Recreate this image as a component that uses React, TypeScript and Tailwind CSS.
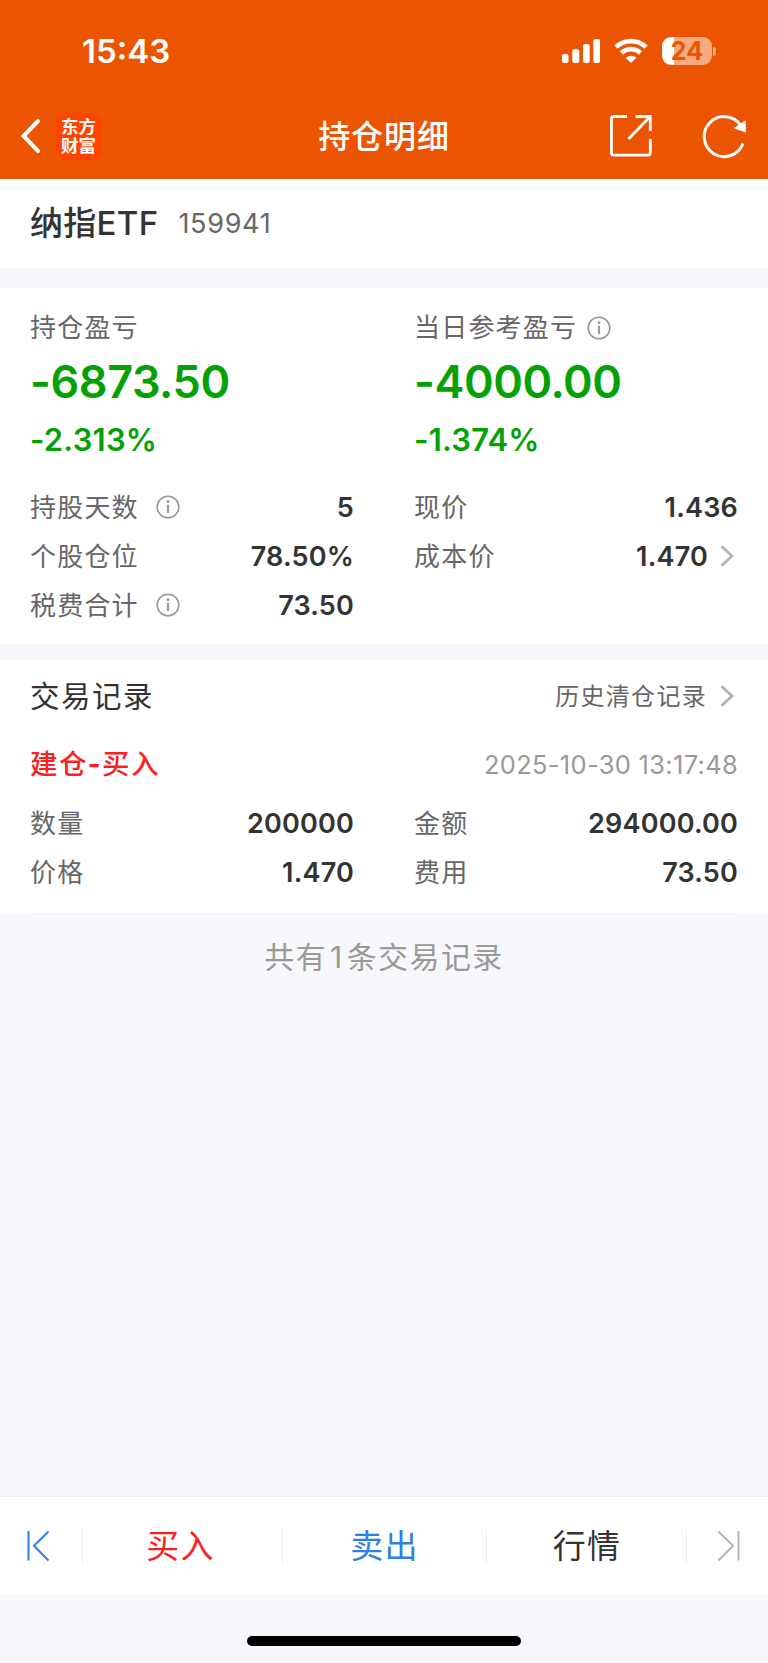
const positionRows = [
  { label: "持股天数", value: "5", info: true },
  { label: "现价", value: "1.436" },
  { label: "个股仓位", value: "78.50%" },
  { label: "成本价", value: "1.470", arrow: true },
  { label: "税费合计", value: "73.50", info: true },
];

const tradeRows = [
  { label: "数量", value: "200000" },
  { label: "金额", value: "294000.00" },
  { label: "价格", value: "1.470" },
  { label: "费用", value: "73.50" },
];

function InfoIcon() {
  return (
    <svg width="24" height="24" viewBox="0 0 24 24" fill="none" stroke="#999" strokeWidth="1.6">
      <circle cx="12" cy="12" r="10.8" />
      <path d="M12 9.8V18" strokeWidth="2.2" />
      <circle cx="12" cy="6.7" r="1.4" fill="#999" stroke="none" />
    </svg>
  );
}

function Chevron() {
  return (
    <svg width="14" height="22" viewBox="0 0 14 22" fill="none" stroke="#b3b3b3" strokeWidth="2.8">
      <path d="M1.5 1.3L12 11L1.5 20.7" />
    </svg>
  );
}

function Row({ label, value, info, arrow }: any) {
  return (
    <div className="flex h-[49px] items-center justify-between">
      <div className="flex items-center gap-[17px]">
        <span className="pt-[2px] text-[26px] tracking-[1.2px] text-[#666]">{label}</span>
        {info && <InfoIcon />}
      </div>
      <div className="flex items-center">
        <span className="pt-[2px] text-[27px] font-semibold tracking-[0.2px] text-[#333]">{value}</span>
        {arrow && (
          <span className="mr-1 ml-3">
            <Chevron />
          </span>
        )}
      </div>
    </div>
  );
}

function Profit({ amount, percent }: any) {
  return (
    <>
      <div className="flex h-[65px] items-center text-[45px] font-semibold tracking-[-0.45px] text-[#03a103]">
        {amount}
      </div>
      <div className="flex h-[50px] items-center text-[31px] font-semibold tracking-[0.2px] text-[#03a103]">
        {percent}
      </div>
    </>
  );
}

function StatusBar() {
  return (
    <div className="flex h-[94px] items-center justify-between pt-2 pr-[52px] pl-[82px]">
      <span className="text-[33px] font-semibold">15:43</span>
      <div className="flex items-center">
        <svg width="40" height="26" viewBox="0 0 40 26" fill="#fff">
          <rect x="1" y="16" width="6.5" height="9" rx="2" />
          <rect x="11.3" y="11.3" width="7" height="13.7" rx="2" />
          <rect x="22" y="6" width="6.7" height="19" rx="2" />
          <rect x="32.3" y="1" width="6.7" height="24" rx="2" />
        </svg>
        <svg className="ml-[13px]" width="34" height="26" viewBox="0 0 34 26" fill="none" stroke="#fff" strokeWidth="4.6">
          <path d="M2 9.2A21.5 21.5 0 0 1 32 9.2" />
          <path d="M7.4 15A13.8 13.8 0 0 1 26.6 15" />
          <path d="M17 25L11.6 19.8A8 8 0 0 1 22.4 19.8Z" fill="#fff" stroke="none" />
        </svg>
        <div className="ml-[14px] flex h-[28px] w-[50px] items-center justify-center rounded-[9px] bg-[linear-gradient(90deg,#fff_24%,#f5aa80_24%)] text-[25px] font-bold text-[#eb5502]">
          24
        </div>
        <div className="ml-[1px] h-[9px] w-[3px] rounded-r-full bg-[#f5aa80]" />
      </div>
    </div>
  );
}

function NavBar() {
  return (
    <div className="grid h-[85px] grid-cols-3 items-center pb-px">
      <div className="flex items-center pl-5">
        <svg width="21" height="36" viewBox="0 0 21 36" fill="none" stroke="#fff" strokeWidth="4" strokeLinecap="round">
          <path d="M18 3L3.6 18L18 33" />
        </svg>
        <div className="ml-[14px] flex h-[47px] w-[47px] flex-col items-center justify-center rounded-[10px] bg-[#ff4400] text-[17.5px] leading-[19.5px] font-bold">
          <span>东方</span>
          <span>财富</span>
        </div>
      </div>
      <h1 className="pt-[2px] text-center text-[32px] font-medium tracking-[0.9px] whitespace-nowrap">持仓明细</h1>
      <div className="flex items-center justify-end gap-[49px] pr-5">
        <svg width="44" height="44" viewBox="0 0 44 44" fill="none" stroke="#fff" strokeWidth="2.8">
          <path d="M18 2.5H5A2.6 2.6 0 0 0 2.4 5V38.5A2.6 2.6 0 0 0 5 41.1H38.7A2.6 2.6 0 0 0 41.3 38.5V25" />
          <path d="M26.5 2.5H41.3V17" />
          <path d="M41 2.8L19.5 25" />
        </svg>
        <svg width="46" height="46" viewBox="0 0 46 46" fill="none" stroke="#fff" strokeWidth="3">
          <path d="M41 30.5A20 20 0 1 1 38.5 12" />
          <path d="M43.8 7.2V19.5L31.5 15.3Z" fill="#fff" stroke="none" />
        </svg>
      </div>
    </div>
  );
}

export default function App() {
  return (
    <div
      lang="zh-CN"
      className="flex h-[1663px] w-[768px] flex-col bg-[#f6f8fb] font-['Inter','Noto_Sans_CJK_SC',sans-serif] leading-none"
    >
      <header className="h-[179px] bg-[#eb5502] text-white">
        <StatusBar />
        <NavBar />
      </header>

      <section className="flex h-[89px] items-center bg-white pl-[30px]">
        <span className="text-[33px] font-medium tracking-[0.3px] text-[#333]">纳指ETF</span>
        <span className="ml-5 text-[27px] tracking-[0.7px] text-[#666]">159941</span>
      </section>

      <section className="mt-5 h-[356px] bg-white px-[30px] pt-[19px]">
        <div className="grid grid-cols-[324px_1fr] gap-x-[60px]">
          <div>
            <div className="flex h-[42px] items-center text-[26px] tracking-[1.2px] text-[#666]">持仓盈亏</div>
            <Profit amount="-6873.50" percent="-2.313%" />
          </div>
          <div>
            <div className="flex h-[42px] items-center gap-[10px] text-[26px] tracking-[1.2px] text-[#666]">
              当日参考盈亏
              <InfoIcon />
            </div>
            <Profit amount="-4000.00" percent="-1.374%" />
          </div>
        </div>
        <div className="mt-[18px] grid grid-cols-[324px_1fr] gap-x-[60px]">
          {positionRows.map((row) => (
            <Row key={row.label} {...row} />
          ))}
        </div>
      </section>

      <section className="mt-4 h-[254px] bg-white px-[30px]">
        <div className="flex h-[72px] items-center justify-between">
          <h2 className="pt-px text-[29.5px] tracking-[1.5px] text-[#333]">交易记录</h2>
          <div className="flex items-center pr-1 text-[24px] tracking-[1.3px] text-[#666]">
            <span className="mr-[13px] pt-px">历史清仓记录</span>
            <Chevron />
          </div>
        </div>
        <div className="flex h-[65px] items-center justify-between">
          <span className="pt-px text-[27.5px] font-medium tracking-[1.4px] text-[#fb1f1f]">
            建仓<span className="font-bold">-</span>买入
          </span>
          <span className="text-[25.5px] tracking-[0.3px] text-[#999]">2025-10-30 13:17:48</span>
        </div>
        <div className="mt-px grid grid-cols-[324px_1fr] gap-x-[60px]">
          {tradeRows.map((row) => (
            <Row key={row.label} {...row} />
          ))}
        </div>
        <div className="mt-[17px] h-px bg-[#f3f4f6]" />
      </section>

      <p className="mt-[27px] text-center text-[30px] leading-[32px] tracking-[1.4px] text-[#999]">
        共有<span className="mx-[3px]">1</span>条交易记录
      </p>

      <nav className="mt-auto flex h-[99px] items-center border-t border-[#eeeff1] bg-white text-[33px] tracking-[1.2px]">
        <div className="flex w-[82px] pl-[26px]">
          <svg width="24" height="32" viewBox="0 0 24 32" fill="none" stroke="#2d80e8" strokeWidth="2">
            <path d="M2.5 1V30.5M22.5 1.5L8 15.8L22.5 30.5" />
          </svg>
        </div>
        <div className="h-[33px] w-px bg-[#eee]" />
        <div className="w-[199px] pt-px pr-1 text-center text-[#fb1f1f]">买入</div>
        <div className="h-[33px] w-px bg-[#eee]" />
        <div className="w-[203px] pt-px text-center text-[#2d80e8]">卖出</div>
        <div className="h-[33px] w-px bg-[#eee]" />
        <div className="w-[199px] pt-px pl-px text-center text-[#333]">行情</div>
        <div className="h-[33px] w-px bg-[#eee]" />
        <div className="flex pl-[30px]">
          <svg width="24" height="32" viewBox="0 0 24 32" fill="none" stroke="#b5b5b5" strokeWidth="2">
            <path d="M21.5 1V30.5M1.5 1.5L16 15.8L1.5 30.5" />
          </svg>
        </div>
      </nav>
      <div className="h-[68px] pt-[41px]">
        <div className="mx-auto h-[10px] w-[274px] rounded-full bg-black" />
      </div>
    </div>
  );
}
